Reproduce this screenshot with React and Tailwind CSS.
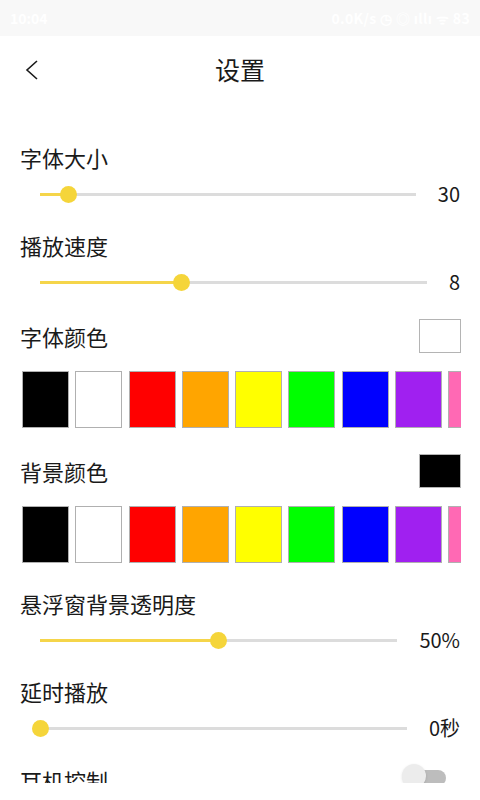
import React from "react";

const font = { fontFamily: '"Noto Sans CJK SC", "Noto Sans", sans-serif' };

const palette = [
  "#000000",
  "#ffffff",
  "#ff0000",
  "#ffa500",
  "#ffff00",
  "#00ff00",
  "#0000ff",
  "#a020f0",
  "#ff69b4",
];

const SliderSection = ({ label, value, percent }) => (
  <div className="flex flex-col mb-[19px]">
    <div className="h-[30px] leading-[28px] text-[22px] text-[#1a1a1a] px-[20px]">
      {label}
    </div>
    <div className="mt-[3px] h-[36px] flex items-center pr-[20px]">
      <div className="flex-1 pl-[40px]">
        <div className="relative h-[3px] bg-[#dcdcdc]">
          <div
            className="absolute left-0 top-0 h-[3px] bg-[#f5d54a]"
            style={{ width: `${percent}%` }}
          />
          <div
            className="absolute top-1/2 w-[17px] h-[17px] -ml-[8.5px] -mt-[8.5px] rounded-full bg-[#f5d53a]"
            style={{ left: `${percent}%` }}
          />
        </div>
      </div>
      <div className="ml-[22px] text-[20px] text-[#1a1a1a] leading-none">
        {value}
      </div>
    </div>
  </div>
);

const ColorSection = ({ label, current }) => (
  <div className="flex flex-col mb-[26px]">
    <div className="h-[34px] flex items-center justify-between pl-[20px] pr-[19px]">
      <span className="text-[22px] text-[#1a1a1a] leading-[28px]">{label}</span>
      <div
        className="w-[42px] h-[34px] border border-[#b4b4b4]"
        style={{ backgroundColor: current }}
      />
    </div>
    <div className="mt-[18px] ml-[20px] mr-[19px] overflow-hidden">
      <div className="flex gap-[6.3px] pl-[2px]">
        {palette.map((c) => (
          <div
            key={c}
            className="w-[47px] h-[57px] shrink-0 border border-[#b0b0b0]"
            style={{ backgroundColor: c }}
          />
        ))}
      </div>
    </div>
  </div>
);

export default function App() {
  return (
    <div className="w-[480px] h-[800px] flex flex-col bg-white overflow-hidden" style={font}>
      <div className="h-[36px] shrink-0 bg-[#f8f8f8] flex items-center justify-between px-[10px] text-white text-[14px] font-bold">
        <span>10:04</span>
        <span className="tracking-wide">0.0K/s ◷ ◎ ıllı ᯤ 83</span>
      </div>

      <div className="flex-1 overflow-hidden flex flex-col">
        <div className="h-[68px] shrink-0 relative flex items-center justify-center">
          <svg
            className="absolute left-[25px] top-[24px]"
            width="14"
            height="20"
            viewBox="0 0 14 20"
            fill="none"
            stroke="#1a1a1a"
            strokeWidth="1.6"
          >
            <path d="M12 1 L2 10 L12 19" />
          </svg>
          <span className="text-[25px] text-[#1a1a1a]">设置</span>
        </div>

        <div className="mt-[39px] flex flex-col">
          <SliderSection label="字体大小" value="30" percent={7.5} />
          <SliderSection label="播放速度" value="8" percent={36.7} />
          <ColorSection label="字体颜色" current="#ffffff" />
          <ColorSection label="背景颜色" current="#000000" />
          <SliderSection label="悬浮窗背景透明度" value="50%" percent={50} />
          <SliderSection label="延时播放" value="0秒" percent={0} />
          <div className="h-[30px] flex items-center justify-between pl-[20px] pr-[34px]">
            <span className="text-[22px] text-[#1a1a1a] leading-[28px]">耳机控制</span>
            <div className="relative w-[44px] h-[26px] -mt-[6px]">
              <div className="absolute right-0 top-[6px] w-[36px] h-[16px] rounded-full bg-[#bdbdbd]" />
              <div className="absolute left-0 top-0 w-[24px] h-[24px] rounded-full bg-[#ececec] shadow-sm" />
            </div>
          </div>
        </div>
      </div>
      <div className="h-[17px] shrink-0 bg-white" />
    </div>
  );
}
